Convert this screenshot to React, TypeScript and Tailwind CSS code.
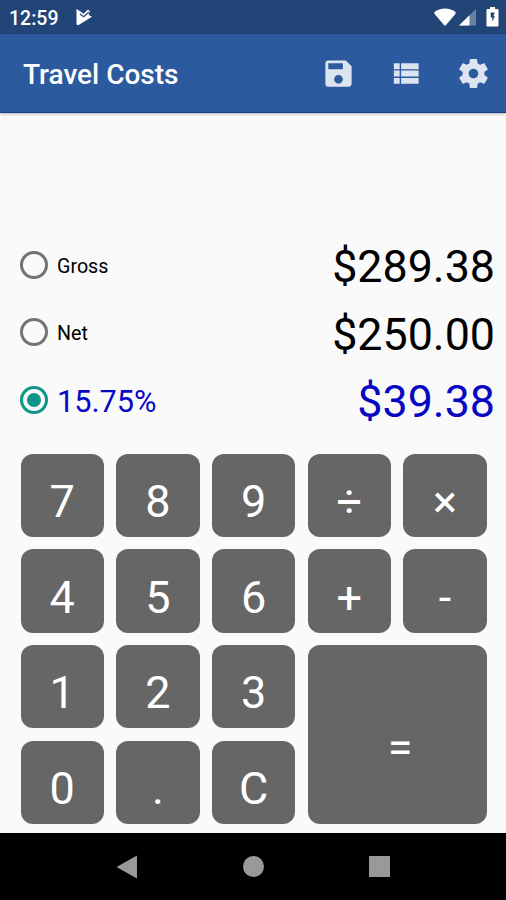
import { MdSave } from "react-icons/md";
import { clsx } from "clsx";

interface AmountRow {
  label: string;
  amount: string;
  selected?: boolean;
}

const ROWS: AmountRow[] = [
  { label: "Gross", amount: "$289.38" },
  { label: "Net", amount: "$250.00" },
  { label: "15.75%", amount: "$39.38", selected: true },
];

const KEYS = [
  "7", "8", "9", "÷", "×",
  "4", "5", "6", "+", "-",
  "1", "2", "3", "=",
  "0", ".", "C",
];

/** Play Store notification glyph with the check cut out of the triangle. */
const PlayCheck = () => (
  <svg width="20" height="18" viewBox="0 0 20 18">
    <path d="M1.500 1 5.500 3.500 8.500 5.800 13 1.500 15 3.500 13.500 6.800 17 8.800 4 16.800Q1.500 17.800 1.500 15.600Z" fill="#fff" />
    <path d="M5 6 8.600 8.800 14 4" fill="none" stroke="#214577" strokeWidth="1.200" />
  </svg>
);

const ListIcon = () => (
  <svg width="35" height="35" viewBox="0 0 24 24" fill="currentColor">
    <path d="M4 14h4v-4H4v4zm0 5h4v-4H4v4zM4 9h4V5H4v4zm5 5h12v-4H9v4zm0 5h12v-4H9v4zM9 5v4h12V5H9z" />
  </svg>
);

/** Solid gear with a small hub. */
const Gear = () => (
  <svg width="35" height="35" viewBox="0 0 24 24" fill="currentColor">
    <path d="M19.430 12.980c.04-.32.07-.64.07-.98s-.03-.66-.07-.98l2.110-1.650c.19-.15.24-.42.12-.64l-2-3.460c-.12-.22-.39-.3-.61-.22l-2.490 1c-.52-.4-1.080-.73-1.690-.98l-.38-2.650C14.460 2.180 14.250 2 14 2h-4c-.25 0-.46.18-.49.42l-.38 2.650c-.61.25-1.170.59-1.690.98l-2.490-1c-.23-.09-.49 0-.61.22l-2 3.460c-.13.22-.07.49.12.64l2.110 1.650c-.04.32-.07.65-.07.98s.03.66.07.98l-2.110 1.650c-.19.15-.24.42-.12.64l2 3.460c.12.22.39.3.61.22l2.490-1c.52.4 1.080.73 1.690.98l.38 2.650c.03.24.24.42.49.42h4c.25 0 .46-.18.49-.42l.38-2.650c.61-.25 1.170-.59 1.690-.98l2.490 1c.23.09.49 0 .61-.22l2-3.460c.12-.22.07-.49-.12-.64l-2.110-1.650zM12 15.300c-1.820 0-3.300-1.480-3.300-3.300s1.480-3.300 3.300-3.300 3.300 1.480 3.300 3.300-1.480 3.300-3.300 3.300z" />
  </svg>
);

const StatusBar = () => (
  <div className="flex h-[34px] shrink-0 items-center bg-[#214577] pl-[9px] pr-[7px] text-white">
    <span className="pt-[3px] text-[19.5px] font-medium leading-none">12:59</span>
    <div className="ml-[17px]">
      <PlayCheck />
    </div>
    <div className="ml-auto flex items-center">
      <svg width="22" height="18" viewBox="0 0 22 18">
        <path d="M.4 4.200C6-.8 16-.8 21.600 4.200Q22 5 21.400 6L12 17Q11 18 10 17L.6 6Q0 5 .4 4.200Z" fill="#fff" />
      </svg>
      <svg className="ml-[3px]" width="18" height="18" viewBox="0 0 18 18">
        <path d="M0 17.500 17 1V17.500Z" fill="#fff" fillOpacity="0.32" />
        <path d="M0 17.500 10.500 7.300V17.500Z" fill="#fff" />
      </svg>
      <svg className="ml-[9px]" width="13" height="20" viewBox="0 0 13 20">
        <path d="M4 0h5v2h2.500q1 0 1 1v15.500q0 1-1 1h-10q-1 0-1-1V3q0-1 1-1H4Z" fill="#fff" />
        <path d="M8.700 5.500H4.700V10.600H6.300V14.800L8.900 9.200H7.400Z" fill="#214577" />
      </svg>
    </div>
  </div>
);

const AppBar = () => (
  <header className="z-10 flex h-[79px] shrink-0 items-center border-b border-[#174384] bg-[#2c5a9f] pl-[23px] pr-[15.500px] shadow-[0_1px_3px_rgba(0,0,0,0.3)]">
    <h1 className="pt-[4px] text-[28px] font-medium leading-none text-white">Travel Costs</h1>
    <div className="ml-auto flex gap-[32.500px] text-[35px] text-[#dce4f1]">
      <MdSave />
      <ListIcon />
      <Gear />
    </div>
  </header>
);

const Radio = ({ selected }: { selected?: boolean }) => (
  <span
    className={clsx(
      "flex size-[28px] items-center justify-center rounded-full",
      selected ? "border-[3px] border-[#0b9686]" : "border-[3px] border-[#737373]",
    )}
  >
    {selected && <span className="size-[14px] rounded-full bg-[#0b9686]" />}
  </span>
);

const Row = ({ label, amount, selected }: AmountRow) => (
  <div className={clsx("flex h-[67.500px] items-center", selected ? "text-[#0808c4]" : "text-black")}>
    <Radio selected={selected} />
    <span
      className={clsx(
        "ml-[9px] leading-none",
        selected ? "pt-[5px] text-[30.700px]" : "pt-[4px] text-[19.700px]",
      )}
    >
      {label}
    </span>
    <span className="ml-auto pt-[6px] text-[44.800px] leading-none">{amount}</span>
  </div>
);

const Key = ({ label }: { label: string }) => (
  <button
    className={clsx(
      "flex items-center justify-center rounded-[12px] bg-[#666666] text-[45px] leading-none text-white",
      label === "=" ? "col-span-2 row-span-2 pl-[6px] pt-[27px]" : "pt-[12px]",
    )}
  >
    {label}
  </button>
);

const NavBar = () => (
  <nav className="flex h-[67px] shrink-0 items-center justify-center gap-[105px] bg-black">
    <svg width="22" height="24" viewBox="0 0 22 24">
      <path d="M.5 12 21 .5v23Z" fill="#999" />
    </svg>
    <span className="size-[21px] rounded-full bg-[#999]" />
    <span className="size-[21px] bg-[#999]" />
  </nav>
);

export default function App() {
  return (
    <div className="flex h-[900px] w-[506px] flex-col overflow-hidden bg-[#fafafa] font-['Roboto',sans-serif]">
      <StatusBar />
      <AppBar />
      <main className="flex flex-1 flex-col">
        <section className="mt-[118px] pl-[20px] pr-[11px]">
          {ROWS.map((row) => (
            <Row key={row.label} {...row} />
          ))}
        </section>
        <section className="ml-[20.500px] mt-[20.400px] grid h-[370px] w-[466.300px] grid-cols-5 grid-rows-4 gap-[12.200px]">
          {KEYS.map((label) => (
            <Key key={label} label={label} />
          ))}
        </section>
      </main>
      <NavBar />
    </div>
  );
}
